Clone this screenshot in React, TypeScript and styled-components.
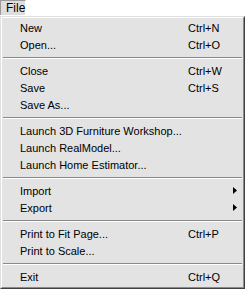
import React from "react";
import styled, { createGlobalStyle } from "styled-components";

type Entry =
  | { kind: "item"; label: string; shortcut?: string; submenu?: boolean }
  | { kind: "separator" };

const entries: Entry[] = [
  { kind: "item", label: "New", shortcut: "Ctrl+N" },
  { kind: "item", label: "Open...", shortcut: "Ctrl+O" },
  { kind: "separator" },
  { kind: "item", label: "Close", shortcut: "Ctrl+W" },
  { kind: "item", label: "Save", shortcut: "Ctrl+S" },
  { kind: "item", label: "Save As..." },
  { kind: "separator" },
  { kind: "item", label: "Launch 3D Furniture Workshop..." },
  { kind: "item", label: "Launch RealModel..." },
  { kind: "item", label: "Launch Home Estimator..." },
  { kind: "separator" },
  { kind: "item", label: "Import", submenu: true },
  { kind: "item", label: "Export", submenu: true },
  { kind: "separator" },
  { kind: "item", label: "Print to Fit Page...", shortcut: "Ctrl+P" },
  { kind: "item", label: "Print to Scale..." },
  { kind: "separator" },
  { kind: "item", label: "Exit", shortcut: "Ctrl+Q" },
];

const GlobalStyle = createGlobalStyle`
  html, body {
    margin: 0;
    padding: 0;
    background: #fff;
  }
  body {
    font-family: "Liberation Sans", Arial, sans-serif;
    font-size: 11px;
    color: #000;
  }
`;

const Screen = styled.div`
  width: 245px;
  height: 289px;
  overflow: hidden;
  display: flex;
  flex-direction: column;
`;

const MenuBar = styled.div`
  height: 16px;
  display: flex;
  background: #fff;
`;

const MenuTitle = styled.div`
  width: 26px;
  height: 15px;
  box-sizing: border-box;
  padding-left: 5px;
  line-height: 14px;
  background: #dedede;
  border-left: 1px solid #9a9a9a;
  border-top: 1px solid #9a9a9a;
  border-right: 1px solid #fff;
  font-size: 12px;
`;

const Dropdown = styled.div`
  flex: 1;
  box-sizing: border-box;
  background: #e3e3e3;
  border-top: 1px solid #e0e0e0;
  border-left: 1px solid #e0e0e0;
  border-right: 1px solid #404040;
  border-bottom: 1px solid #404040;
  display: flex;
  flex-direction: column;
`;

const DropdownInner = styled.div`
  flex: 1;
  border-top: 1px solid #fff;
  border-left: 1px solid #fff;
  border-right: 1px solid #8a8a8a;
  border-bottom: 1px solid #8a8a8a;
  padding: 1px 0;
`;

const Item = styled.div`
  height: 17px;
  display: grid;
  grid-template-columns: 168px 1fr 14px;
  align-items: center;
  padding-left: 18px;
  white-space: nowrap;
`;

const Shortcut = styled.span`
  color: #000;
`;

const ArrowCell = styled.span`
  display: flex;
  align-items: center;
  padding-left: 4px;
`;

const Separator = styled.div`
  height: 9px;
  display: flex;
  flex-direction: column;
  justify-content: center;
  padding: 0 1px;

  &::before {
    content: "";
    display: block;
    height: 1px;
    background: #8a8a8a;
  }
  &::after {
    content: "";
    display: block;
    height: 1px;
    background: #fff;
  }
`;

const SubmenuArrow = () => (
  <svg width="4" height="7" viewBox="0 0 4 7">
    <path d="M0 0 L4 3.5 L0 7 Z" fill="#000" />
  </svg>
);

export default function App() {
  return (
    <>
      <GlobalStyle />
      <Screen>
        <MenuBar>
          <MenuTitle>File</MenuTitle>
        </MenuBar>
        <Dropdown>
          <DropdownInner>
            {entries.map((e, i) =>
              e.kind === "separator" ? (
                <Separator key={i} />
              ) : (
                <Item key={i}>
                  <span>{e.label}</span>
                  <Shortcut>{e.shortcut}</Shortcut>
                  <ArrowCell>{e.submenu && <SubmenuArrow />}</ArrowCell>
                </Item>
              )
            )}
          </DropdownInner>
        </Dropdown>
      </Screen>
    </>
  );
}
